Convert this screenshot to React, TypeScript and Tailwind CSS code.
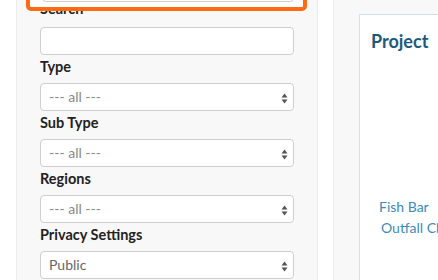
import React from "react";

const fieldClass =
  "relative h-[28px] w-full rounded-[4px] border border-[#cfcfcf] bg-white";

function Arrows() {
  return (
    <svg className="absolute right-[5px] top-[9px]" width="7" height="11" viewBox="0 0 7 11">
      <path d="M3.5 0.5 L6.5 4.5 L0.5 4.5 Z" fill="#555" />
      <path d="M3.5 10.5 L6.5 6.5 L0.5 6.5 Z" fill="#555" />
    </svg>
  );
}

function Label({ children }: { children: React.ReactNode }) {
  return (
    <div className="mt-[2px] mb-[6px] text-[14.5px] leading-[20px] font-bold text-[#222]">
      {children}
    </div>
  );
}

function Select({ value, dark }: { value: string; dark?: boolean }) {
  return (
    <div className={fieldClass}>
      <span
        className={`absolute left-[8px] top-[4px] text-[14px] leading-[18px] ${
          dark ? "text-[#666]" : "text-[#8a8a8a]"
        }`}
      >
        {value}
      </span>
      <Arrows />
    </div>
  );
}

export default function App() {
  return (
    <div
      className="flex h-[280px] w-[438px] overflow-hidden bg-white"
      style={{ fontFamily: "Lato, 'Open Sans', sans-serif" }}
    >
      <div className="w-[16px] shrink-0" />
      <div className="relative w-[302px] shrink-0 border-x border-[#ececec] bg-[#f8f8f8] px-[23px]">
        <div className="absolute left-[9px] top-[-30px] h-[41px] w-[281px] rounded-[5px] border-4 border-[#fc6a12] bg-white">
          <div className="absolute bottom-[5px] left-[12px] h-[20px] w-[252px] rounded-[4px] border border-[#cfcfcf] bg-white" />
        </div>
        <div className="mt-[-1px] mb-[8px] text-[14.5px] leading-[20px] font-bold text-[#222]">
          Search
        </div>
        <div className={fieldClass} />
        <Label>Type</Label>
        <Select value="--- all ---" />
        <Label>Sub Type</Label>
        <Select value="--- all ---" />
        <Label>Regions</Label>
        <Select value="--- all ---" />
        <Label>Privacy Settings</Label>
        <Select value="Public" dark />
      </div>
      <div className="w-[15px] shrink-0" />
      <div className="flex-1 border-l border-[#ececec] bg-[#f8f8f8] pl-[25px] pt-[14px]">
        <div className="h-[300px] w-[200px] border border-[#d2e1ea] bg-white pl-[11px] pt-[14px]">
          <div className="text-[18px] leading-[24px] font-bold text-[#1c5a7d]">Project</div>
          <div className="mt-[143px] text-[14px] leading-[21px] text-[#3b8bbd]">
            <div className="pl-[8px]">Fish Bar</div>
            <div className="pl-[10px]">Outfall Channel</div>
          </div>
        </div>
      </div>
    </div>
  );
}
